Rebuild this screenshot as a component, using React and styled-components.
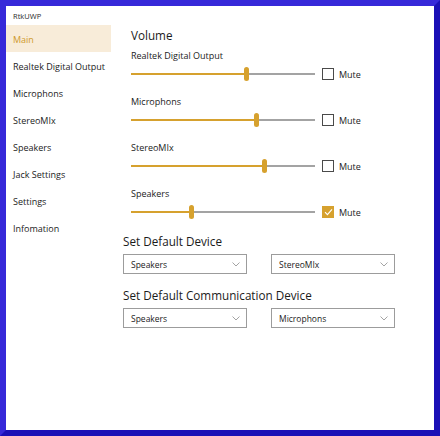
import React from 'react';
import styled, { createGlobalStyle } from 'styled-components';

const GlobalStyle = createGlobalStyle`
  html, body {
    margin: 0;
    padding: 0;
    background: #ffffff;
  }
  body {
    font-family: 'Open Sans', 'Noto Sans', sans-serif;
    color: #1b1b1b;
  }
`;

const ACCENT = '#d6a12e';

const Window = styled.div`
  width: 440px;
  height: 436px;
  box-sizing: border-box;
  border-style: solid;
  border-width: 6px;
  border-color: #3629d9 #1a10b6 #1a10b6 #3629d9;
  background: #ffffff;
  display: flex;
  flex-direction: column;
`;

const TitleBar = styled.div`
  height: 19px;
  display: flex;
  align-items: center;
  padding-left: 7px;
  font-size: 7.5px;
  color: #2a2a2a;
`;

const Body = styled.div`
  flex: 1;
  display: flex;
`;

const Sidebar = styled.nav`
  width: 105px;
  display: flex;
  flex-direction: column;
`;

const NavItem = styled.div`
  height: 27px;
  box-sizing: border-box;
  display: flex;
  align-items: center;
  padding: 2px 0 0 7px;
  font-size: 9px;
  white-space: nowrap;
  background: ${(p) => (p.$active ? '#f8ecd9' : 'transparent')};
  color: ${(p) => (p.$active ? '#cf9a2c' : '#1b1b1b')};
`;

const Content = styled.main`
  flex: 1;
  padding: 2px 0 0 12px;
`;

const Heading = styled.h2`
  margin: 0;
  font-size: 11.7px;
  font-weight: 400;
  line-height: 16px;
  white-space: nowrap;
`;

const VolumeBlock = styled.section`
  padding-left: 8px;
`;

const VolumeRow = styled.div`
  margin-top: ${(p) => (p.$first ? '6px' : '10px')};
`;

const RowLabel = styled.div`
  font-size: 9px;
  line-height: 14px;
  white-space: nowrap;
`;

const ControlRow = styled.div`
  height: 22px;
  display: flex;
  align-items: center;
`;

const Track = styled.div`
  position: relative;
  width: 184px;
  height: 2px;
  background: #a3a3a3;
`;

const Fill = styled.div`
  height: 100%;
  background: ${ACCENT};
`;

const Thumb = styled.div`
  position: absolute;
  top: -6px;
  width: 5px;
  height: 14px;
  margin-left: -2.5px;
  border-radius: 2.5px;
  background: ${ACCENT};
`;

const Check = styled.div`
  margin-left: 7px;
  width: 12px;
  height: 12px;
  box-sizing: border-box;
  border: ${(p) => (p.$on ? 'none' : '1.5px solid #4a4a4a')};
  background: ${(p) => (p.$on ? ACCENT : '#ffffff')};
  display: flex;
  align-items: center;
  justify-content: center;
`;

const MuteText = styled.span`
  margin-left: 5px;
  font-size: 9px;
`;

const SelectRow = styled.div`
  display: flex;
  gap: 24px;
  margin-top: 5px;
`;

const Select = styled.div`
  width: 124px;
  height: 20px;
  box-sizing: border-box;
  border: 1.5px solid #9c9c9c;
  display: flex;
  align-items: center;
  justify-content: space-between;
  padding: 0 6px 0 7px;
  font-size: 8.5px;
`;

const Section = styled.section`
  margin-top: ${(p) => p.$top};
`;

const Slider = ({ value }) => (
  <Track>
    <Fill style={{ width: `${value}%` }} />
    <Thumb style={{ left: `${value}%` }} />
  </Track>
);

const Chevron = () => (
  <svg width="8" height="5" viewBox="0 0 8 5">
    <path d="M0.5 0.5 L4 4 L7.5 0.5" fill="none" stroke="#9a9a9a" strokeWidth="0.9" />
  </svg>
);

const Tick = () => (
  <svg width="9" height="8" viewBox="0 0 9 8">
    <path d="M1 4.2 L3.4 6.6 L8 1.4" fill="none" stroke="#ffffff" strokeWidth="1.1" />
  </svg>
);

const menu = [
  'Main',
  'Realtek Digital Output',
  'Microphons',
  'StereoMIx',
  'Speakers',
  'Jack Settings',
  'Settings',
  'Infomation',
];

const channels = [
  { name: 'Realtek Digital Output', value: 63, muted: false },
  { name: 'Microphons', value: 68, muted: false },
  { name: 'StereoMIx', value: 72.5, muted: false },
  { name: 'Speakers', value: 33, muted: true },
];

export default function App() {
  return (
    <>
      <GlobalStyle />
      <Window>
        <TitleBar>RtkUWP</TitleBar>
        <Body>
          <Sidebar>
            {menu.map((m, i) => (
              <NavItem key={m} $active={i === 0}>
                {m}
              </NavItem>
            ))}
          </Sidebar>
          <Content>
            <VolumeBlock>
              <Heading>Volume</Heading>
              {channels.map((c, i) => (
                <VolumeRow key={c.name} $first={i === 0}>
                  <RowLabel>{c.name}</RowLabel>
                  <ControlRow>
                    <Slider value={c.value} />
                    <Check $on={c.muted}>{c.muted && <Tick />}</Check>
                    <MuteText>Mute</MuteText>
                  </ControlRow>
                </VolumeRow>
              ))}
            </VolumeBlock>

            <Section $top="10px">
              <Heading>Set Default Device</Heading>
              <SelectRow>
                <Select>
                  Speakers
                  <Chevron />
                </Select>
                <Select>
                  StereoMIx
                  <Chevron />
                </Select>
              </SelectRow>
            </Section>

            <Section $top="13px">
              <Heading>Set Default Communication Device</Heading>
              <SelectRow>
                <Select>
                  Speakers
                  <Chevron />
                </Select>
                <Select>
                  Microphons
                  <Chevron />
                </Select>
              </SelectRow>
            </Section>
          </Content>
        </Body>
      </Window>
    </>
  );
}
